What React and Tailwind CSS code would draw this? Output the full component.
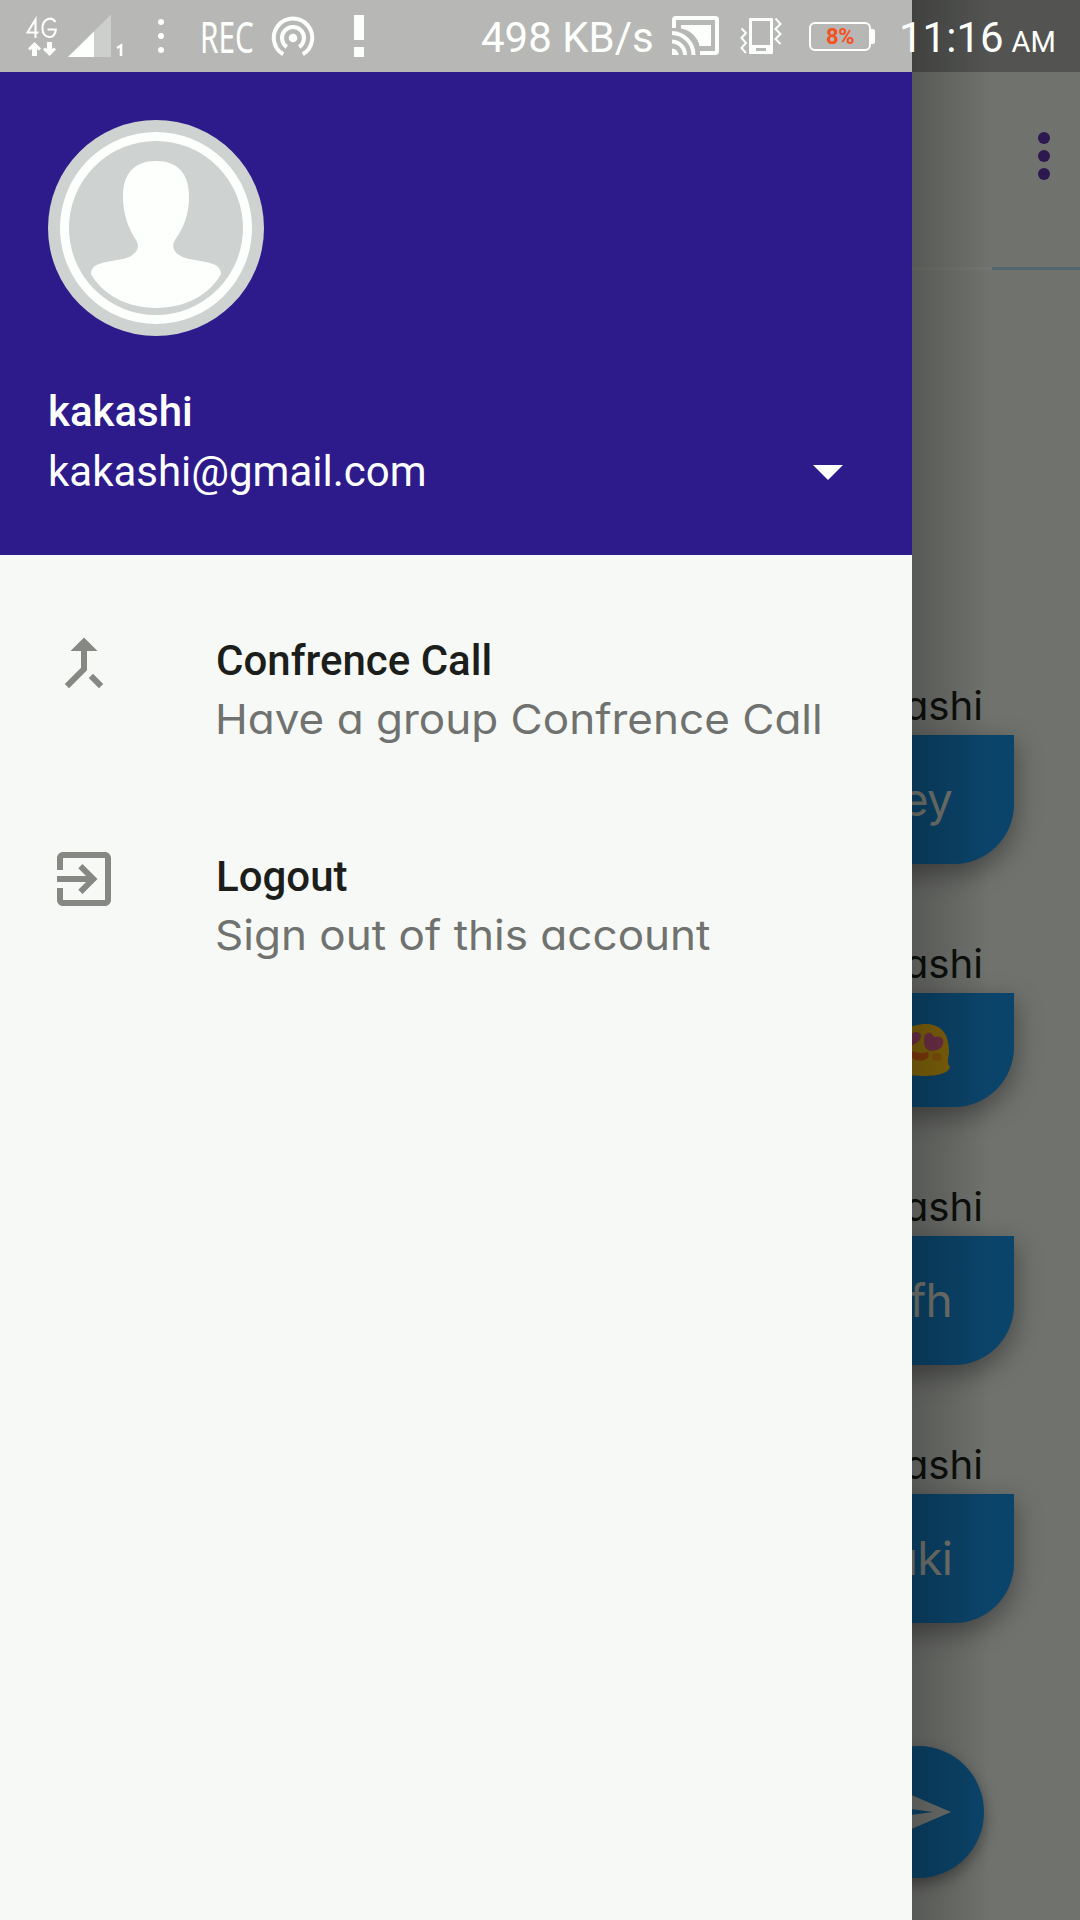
import React from "react";

function CellularIcon() {
  return (
    <svg className="h-[72px] w-[100px] shrink-0" viewBox="26 0 100 72" fill="none">
      <path d="M35.5 38V19.5L27.5 32.5H38.5" stroke="#fdfffc" strokeWidth="2.1" />
      <path d="M55.5 22C51.5 16 42.5 18.5 42.5 28.5C42.5 40 55.8 39.5 55.8 29.5H47.5" stroke="#fdfffc" strokeWidth="2.1" />
      <path d="M34.5 42L28 48.5L30 50.5L32 49V56H37V49L39 50.5L41 48.5Z" fill="#fdfffc" />
      <path d="M49.5 56L43 49.5L45 47.5L47 49V42H52V49L54 47.5L56 49.5Z" fill="#fdfffc" />
      <path d="M111 14.5V57H68Z" fill="#cdcfcc" />
      <path d="M94 31.5V57H68Z" fill="#fdfffc" />
      <path d="M117 48L121 45.5V56" stroke="#fdfffc" strokeWidth="2.6" />
    </svg>
  );
}

function HotspotIcon() {
  return (
    <svg className="h-[44px] w-[44px] shrink-0" viewBox="0 0 44 44" fill="none" stroke="#fdfffc" strokeWidth="4">
      <circle cx="22" cy="22" r="4.3" fill="#fdfffc" stroke="none" />
      <path d="M15.8 31A11 11 0 1 1 28.2 31" />
      <path d="M12.2 38.3A19.2 19.2 0 1 1 31.8 38.3" />
    </svg>
  );
}

function CastIcon() {
  return (
    <svg className="h-[40px] w-[48px] shrink-0" viewBox="672 17 48 40" fill="none" stroke="#fdfffc" strokeWidth="4">
      <path d="M674 29V21Q674 19 676 19H715Q717 19 717 21V52Q717 54 715 54H700" />
      <path d="M681 26H711V47H699.5C698 38 690 31 681 29.500Z" fill="#fdfffc" stroke="none" />
      <path d="M672 34A22 22 0 0 1 693.500 56M672 42.500A13.500 13.500 0 0 1 685 56" />
      <path d="M672 49.500A6.500 6.500 0 0 1 678.500 56H672Z" fill="#fdfffc" stroke="none" />
    </svg>
  );
}

function VibrateIcon() {
  return (
    <svg className="h-[36px] w-[42px] shrink-0" viewBox="740 18 42 36" fill="none" stroke="#fdfffc">
      <path fillRule="evenodd" d="M749 19Q749 18 750 18H772Q773 18 773 19V53Q773 54 772 54H750Q749 54 749 53ZM752 21V45H770V21ZM756 48V51H766V48Z" fill="#fdfffc" stroke="none" />
      <path d="M741.500 28.500L746 33L741.500 38L746 43L741.500 48L746 53" strokeWidth="2" />
      <path d="M775.500 18.500L780.500 24L775.500 29L780.500 34L775.500 39L780.500 44" strokeWidth="2" />
    </svg>
  );
}

function Battery() {
  return (
    <div className="flex items-center">
      <div className="flex h-[29px] w-[62px] items-center justify-center rounded-[6px] border-2 border-[#fdfffc] pt-[2px] text-[22px] font-bold leading-none tracking-[-0.5px] text-[#f4511e]">
        8%
      </div>
      <div className="h-[15px] w-[4px] rounded-r-[2px] bg-[#fdfffc]" />
    </div>
  );
}

function StatusBar() {
  return (
    <div className="absolute inset-x-0 top-0 flex h-[72px] items-center bg-black/26 pl-[26px] text-[42px] leading-none text-[#fdfffc]">
      <CellularIcon />
      <div className="ml-[32px] flex flex-col gap-[8px]">
        <i className="size-[6px] rounded-full bg-[#fdfffc]" />
        <i className="size-[6px] rounded-full bg-[#fdfffc]" />
        <i className="size-[6px] rounded-full bg-[#fdfffc]" />
      </div>
      <span className="ml-[36px] w-[54px] origin-left scale-x-[0.69] pt-[1px] font-['Noto_Sans'] text-[43px]">REC</span>
      <div className="ml-[17px] pt-[3px]">
        <HotspotIcon />
      </div>
      <div className="ml-[39px] flex flex-col gap-[7px]">
        <i className="h-[25px] w-[10px] bg-[#fdfffc]" />
        <i className="h-[10px] w-[10px] bg-[#fdfffc]" />
      </div>
      <span className="ml-[117px] w-[191px] whitespace-nowrap pt-[3px]">498 KB/s</span>
      <CastIcon />
      <div className="ml-[20px]">
        <VibrateIcon />
      </div>
      <div className="ml-[27px]">
        <Battery />
      </div>
      <div className="ml-[24px] flex items-baseline gap-[8px] pt-[3px]">
        <span>11:16</span>
        <span className="text-[29px]">AM</span>
      </div>
    </div>
  );
}

function Avatar() {
  return (
    <svg className="size-[216px]" viewBox="0 0 216 216">
      <circle cx="108" cy="108" r="108" fill="#ced2d1" />
      <circle cx="108" cy="108" r="91.500" fill="none" stroke="#fdfffd" strokeWidth="9" />
      <path
        d="M108 41C130 41 141 54 141 76C141 95 136 107 127 120C122 128 128 136 141 139C156 142 173 142 173 154C162 174 138 188 108 188C79 188 54 174 43 154C43 142 60 142 75 139C88 136 93 128 88 120C80 107 75 95 75 76C75 54 86 41 108 41Z"
        fill="#fdfffd"
      />
    </svg>
  );
}

function MenuItem({ path, title, subtitle }) {
  return (
    <div className="flex h-[216px] gap-[96px] pl-[48px]">
      <svg className="size-[72px]" viewBox="0 0 24 24" fill="#868884">
        <path d={path} />
      </svg>
      <div className="flex flex-col whitespace-nowrap pt-[4px]">
        <span className="w-max text-[42px] font-medium leading-[59px] text-[#1c1e1b]">{title}</span>
        <span className="-ml-px w-max origin-left scale-x-[1.074] font-[Inter,sans-serif] text-[41px] font-[380] leading-[59px] text-[#70726f] [font-feature-settings:'cv11'] [font-optical-sizing:none]">
          {subtitle}
        </span>
      </div>
    </div>
  );
}

function Drawer() {
  return (
    <aside className="flex w-[912px] flex-col bg-[#f7f9f6] pt-[72px]">
      <header className="flex h-[483px] flex-col bg-[#2d1b8c] px-[48px] pt-[48px] text-[42px] text-[#fdfffd]">
        <Avatar />
        <span className="mt-[46px] w-max font-medium leading-[60px]">kakashi</span>
        <div className="flex items-center justify-between pr-[21px]">
          <span className="leading-[60px]">kakashi@gmail.com</span>
          <svg className="h-[15px] w-[30px]" viewBox="0 0 30 15" fill="#fdfffd">
            <path d="M0 0H30L15 15Z" />
          </svg>
        </div>
      </header>
      <nav className="pt-[72px]">
        <MenuItem
          title="Confrence Call"
          subtitle="Have a group Confrence Call"
          path="M17 20.410L18.410 19 15 15.590 13.590 17 17 20.410zM7.500 8H11v5.590L5.590 19 7 20.410l6-6V8h3.500L12 3.500 7.500 8z"
        />
        <MenuItem
          title="Logout"
          subtitle="Sign out of this account"
          path="M10.090 15.590L11.500 17l5-5-5-5-1.410 1.410L12.670 11H3v2h9.670l-2.580 2.590zM19 3H5c-1.110 0-2 .9-2 2v4h2V5h14v14H5v-4H3v4c0 1.100.890 2 2 2h14c1.100 0 2-.9 2-2V5c0-1.100-.9-2-2-2z"
        />
      </nav>
    </aside>
  );
}

function HeartEyes() {
  return (
    <svg className="h-[52px] w-[60px]" viewBox="0 0 60 52">
      <path d="M36 0C50 0 59 9 59 27C59 35 56 37 60 43C59 49 48 52 34 52S1 49 0 43C4 37 1 35 1 27C1 9 20 0 36 0Z" fill="#80630a" />
      <path d="M43 27C36 27 34 23 34 16C34 8 41 6 44 13C50 11 55 15 53 20C52 24 48 26 43 27Z" fill="#703047" />
      <path d="M17 24C11 21 6 18 8 13C10 9 16 9 19 13C21 7 31 6 31 13C30 18 23 21 17 24Z" fill="#703047" />
      <path d="M19 26Q30 31 38 28Q41 36 30 36.500Q19 36 19 26Z" fill="#803b0b" />
      <ellipse cx="47" cy="33" rx="5" ry="4" fill="#843f0c" opacity=".5" />
    </svg>
  );
}

function Message({ children, short }) {
  return (
    <div className="mb-[76px] flex flex-col items-end">
      <span className="mb-[5px] mr-[97px] origin-right scale-x-[1.03] font-[Inter,sans-serif] text-[39px] font-[380] leading-[48px] text-[#0c0f0b] [font-feature-settings:'cv11'] [font-optical-sizing:none]">kakashi</span>
      <div
        className={`mr-[66px] flex min-w-[260px] items-center justify-end rounded-b-[60px] bg-[#0b446a] font-[Inter,sans-serif] text-[46px] tracking-[-0.8px] text-[#747671] shadow-[0_9px_24px_2px_rgba(0,0,0,0.34)] [font-feature-settings:'cv11'] ${short ? "h-[114px] pr-[64px]" : "h-[129px] pr-[62px]"}`}
      >
        {children}
      </div>
    </div>
  );
}

function Chat() {
  return (
    <main className="flex flex-col bg-[#70726e] pt-[72px]">
      <div className="flex h-[195px] justify-end pr-[30px] pt-[60px]">
        <div className="flex flex-col gap-[6px]">
          <i className="size-[12px] rounded-full bg-[#2d1850]" />
          <i className="size-[12px] rounded-full bg-[#2d1850]" />
          <i className="size-[12px] rounded-full bg-[#2d1850]" />
        </div>
      </div>
      <div className="flex h-[3px] justify-end bg-[#747671]">
        <div className="w-[88px] bg-[#53666f]" />
      </div>
      <div className="flex flex-col pt-[412px]">
        <Message>Hey</Message>
        <Message short><HeartEyes /></Message>
        <Message>fh</Message>
        <Message>uki</Message>
      </div>
      <div className="mr-[96px] mt-[47px] flex size-[132px] items-center justify-center self-end rounded-full bg-[#0b446a] shadow-[0_6px_15px_rgba(0,0,0,0.4)]">
        <svg className="size-[72px]" viewBox="0 0 24 24" fill="#70726e">
          <path d="M2.010 21L23 12 2.010 3 2 10l15 2-15 2z" />
        </svg>
      </div>
    </main>
  );
}

export default function App() {
  return (
    <div className="relative grid h-[1920px] w-[1080px] grid-cols-[1080px] grid-rows-[1920px] overflow-hidden font-[Roboto,sans-serif]">
      <div className="col-start-1 row-start-1 grid">
        <Chat />
      </div>
      <div className="relative col-start-1 row-start-1 flex">
        <Drawer />
        <div className="w-[78px] bg-linear-to-r from-black/22 to-transparent" />
      </div>
      <StatusBar />
    </div>
  );
}
